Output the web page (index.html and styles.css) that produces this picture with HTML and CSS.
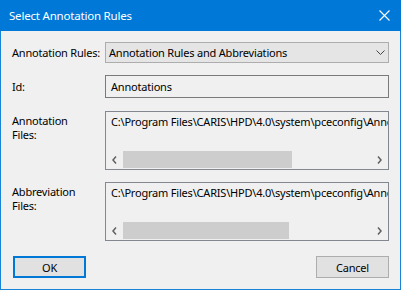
FILE: index.html
```html
<!DOCTYPE html>
<html>
<head>
    <link rel="stylesheet" href="styles.css">
</head>
<body>
    <div class="window">
        <div class="titlebar">
            <span class="title">Select Annotation Rules</span>
            <svg class="close" width="11" height="11" viewBox="0 0 11 11">
                <path d="M0.5 0.5 L10.5 10.5 M10.5 0.5 L0.5 10.5" stroke="#fff" stroke-width="1.1" fill="none"/>
            </svg>
        </div>
        <div class="content">
            <div class="row row-mid">
                <div class="label">Annotation Rules:</div>
                <div class="combo">
                    <span>Annotation Rules and Abbreviations</span>
                    <svg width="9" height="5" viewBox="0 0 9 5">
                        <path d="M0.5 0.5 L4.5 4.5 L8.5 0.5" stroke="#444" fill="none"/>
                    </svg>
                </div>
            </div>
            <div class="row row-mid row-id">
                <div class="label">Id:</div>
                <div class="textbox">Annotations</div>
            </div>
            <div class="row row-files">
                <div class="label">Annotation<br>Files:</div>
                <div class="listbox">
                    <div class="listtext">C:\Program Files\CARIS\HPD\4.0\system\pceconfig\Annotations\AnnotationRules.xml</div>
                    <div class="hscroll">
                        <div class="arrow">
                            <svg width="5" height="8" viewBox="0 0 5 8"><path d="M4 0.5 L1 4 L4 7.5" stroke="#606060" stroke-width="1.5" fill="none"/></svg>
                        </div>
                        <div class="track"><div class="thumb thumb-a"></div></div>
                        <div class="arrow">
                            <svg width="5" height="8" viewBox="0 0 5 8"><path d="M1 0.5 L4 4 L1 7.5" stroke="#606060" stroke-width="1.5" fill="none"/></svg>
                        </div>
                    </div>
                </div>
            </div>
            <div class="row row-files">
                <div class="label">Abbreviation<br>Files:</div>
                <div class="listbox">
                    <div class="listtext">C:\Program Files\CARIS\HPD\4.0\system\pceconfig\Annotations\Abbreviations.xml</div>
                    <div class="hscroll">
                        <div class="arrow">
                            <svg width="5" height="8" viewBox="0 0 5 8"><path d="M4 0.5 L1 4 L4 7.5" stroke="#606060" stroke-width="1.5" fill="none"/></svg>
                        </div>
                        <div class="track"><div class="thumb thumb-b"></div></div>
                        <div class="arrow">
                            <svg width="5" height="8" viewBox="0 0 5 8"><path d="M1 0.5 L4 4 L1 7.5" stroke="#606060" stroke-width="1.5" fill="none"/></svg>
                        </div>
                    </div>
                </div>
            </div>
            <div class="buttons">
                <button class="btn btn-default">OK</button>
                <button class="btn">Cancel</button>
            </div>
        </div>
    </div>
</body>
</html>
```
FILE: styles.css
```css
body {
    margin: 0;
    background: #f0f0f0;
    font-family: "Noto Sans", sans-serif;
    font-size: 11px;
    letter-spacing: -0.2px;
    color: #000;
}
.window {
    width: 401px;
    height: 290px;
    box-sizing: border-box;
    border: 1px solid #1883d7;
    border-top: none;
    background: #f0f0f0;
}
.titlebar {
    height: 31px;
    margin: 0 -1px;
    background: #0078d7;
    color: #fff;
    display: flex;
    align-items: center;
    justify-content: space-between;
    padding: 0 11px 0 9px;
}
.title {
    font-size: 11.5px;
}
.content {
    padding: 11px 11px 0 11px;
}
.row {
    display: flex;
    margin-bottom: 12px;
}
.row-mid {
    align-items: center;
}
.row-id {
    margin-bottom: 13px;
}
.label {
    width: 93px;
    flex: none;
    line-height: 14px;
    white-space: nowrap;
}
.row-files .label {
    padding-top: 3px;
}
.combo {
    width: 284px;
    height: 21px;
    box-sizing: border-box;
    border: 1px solid #adadad;
    background: #e5e5e5;
    display: flex;
    align-items: center;
    justify-content: space-between;
    padding: 0 3px 0 3px;
}
.textbox {
    width: 284px;
    height: 23px;
    box-sizing: border-box;
    border: 1px solid #7a7a7a;
    padding: 0 5px;
    line-height: 21px;
}
.listbox {
    width: 284px;
    height: 59px;
    box-sizing: border-box;
    border: 1px solid #828790;
    display: flex;
    flex-direction: column;
    justify-content: space-between;
}
.listtext {
    padding: 3px 5px 0 5px;
    line-height: 14px;
    white-space: nowrap;
    overflow: hidden;
}
.hscroll {
    height: 17px;
    margin-bottom: 1px;
    display: flex;
}
.arrow {
    width: 17px;
    flex: none;
    display: flex;
    align-items: center;
    justify-content: center;
}
.track {
    flex: 1;
    display: flex;
    align-items: stretch;
}
.thumb {
    background: #cdcdcd;
}
.thumb-a {
    width: 169px;
}
.thumb-b {
    width: 166px;
}
.buttons {
    display: flex;
    justify-content: space-between;
    padding: 3px 0 0 1px;
}
.btn {
    width: 73px;
    height: 22px;
    box-sizing: border-box;
    border: 1px solid #adadad;
    background: #e1e1e1;
    font-family: "Noto Sans", sans-serif;
    font-size: 11px;
    letter-spacing: -0.2px;
    color: #000;
    padding: 0;
}
.btn-default {
    border: 2px solid #0078d7;
}
```
